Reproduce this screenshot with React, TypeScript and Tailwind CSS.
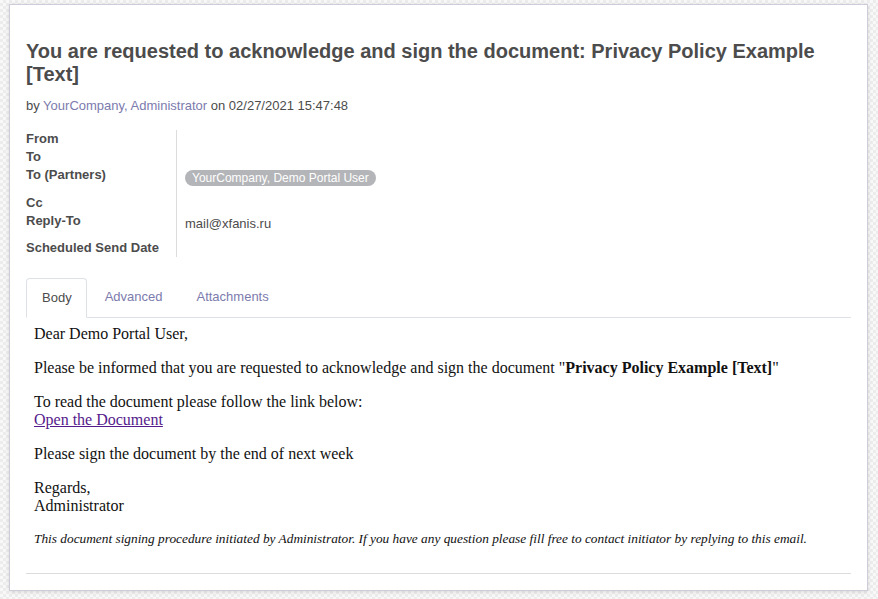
const fields = [
  { label: 'From', h: 'h-[18px]' },
  { label: 'To', h: 'h-[18px]' },
  { label: 'To (Partners)', h: 'h-[28px]', badge: 'YourCompany, Demo Portal User' },
  { label: 'Cc', h: 'h-[18px]' },
  { label: 'Reply-To', h: 'h-[27px]', value: 'mail@xfanis.ru' },
  { label: 'Scheduled Send Date', h: 'h-[18px]' },
]

export default function App() {
  return (
    <div className="min-h-screen bg-[image:repeating-conic-gradient(#ececec_0_25%,#f8f8f8_0_50%)] bg-[length:6px_6px] pt-[4px] pl-[9px] pr-[10px] pb-[10px] font-['Liberation_Sans',Arial,sans-serif] text-[13px] text-[#4c4c4c]">
      <div className="bg-white border border-[#cccdd8] shadow-[0_1px_4px_rgba(0,0,0,0.12)] px-4 pt-[35px] pb-4">
        {/* Subject */}
        <h1 className="font-bold text-[20px] leading-[23px] pr-6">
          You are requested to acknowledge and sign the document: Privacy Policy Example [Text]
        </h1>
        <p className="mt-[11px] leading-[18px]">
          by <span className="text-[#7c7bad]">YourCompany, Administrator</span> on 02/27/2021 15:47:48
        </p>

        {/* Header fields */}
        <div className="mt-[15px] grid grid-cols-[150px_1fr]">
          <div>
            {fields.map((f) => (
              <div key={f.label} className={`${f.h} font-bold leading-[18px]`}>
                {f.label}
              </div>
            ))}
          </div>
          <div className="border-l border-[#dcdcdc] pl-2">
            {fields.map((f) => (
              <div key={f.label} className={f.h}>
                {f.badge && (
                  <span className="inline-block mt-[4px] h-[16px] leading-[16px] rounded-full bg-[#b4b5b8] text-white text-[12px] px-[7px]">
                    {f.badge}
                  </span>
                )}
                {f.value && <span className="block pt-[3px] leading-[18px]">{f.value}</span>}
              </div>
            ))}
          </div>
        </div>

        {/* Tabs */}
        <div className="mt-[20px] flex items-end gap-[2px] border-b border-[#dee2e6]">
          <div className="h-[40px] -mb-px flex items-center pl-[15px] pr-[14px] border border-[#dee2e6] border-b-white rounded-t-[4px] bg-white">
            Body
          </div>
          <div className="h-[40px] flex items-center px-4 text-[#7c7bad]">Advanced</div>
          <div className="h-[40px] flex items-center px-4 text-[#7c7bad]">Attachments</div>
        </div>

        {/* Body */}
        <div className="pt-[7px] px-2 font-['Liberation_Serif','Times_New_Roman',serif] text-[16px] leading-[18px] text-[#111]">
          <p>Dear Demo Portal User,</p>
          <p className="mt-4">
            Please be informed that you are requested to acknowledge and sign the document "
            <b>Privacy Policy Example [Text]</b>"
          </p>
          <p className="mt-4">
            To read the document please follow the link below:
            <br />
            <a href="#" className="text-[#551a8b] underline">
              Open the Document
            </a>
          </p>
          <p className="mt-4">Please sign the document by the end of next week</p>
          <p className="mt-4">
            Regards,
            <br />
            Administrator
          </p>
          <p className="mt-[16px] text-[13.33px] leading-[15px] italic">
            This document signing procedure initiated by Administrator. If you have any question please fill free to
            contact initiator by replying to this email.
          </p>
        </div>

        <div className="mt-[27px] border-t border-[#dcdcdc]" />
      </div>
    </div>
  )
}
